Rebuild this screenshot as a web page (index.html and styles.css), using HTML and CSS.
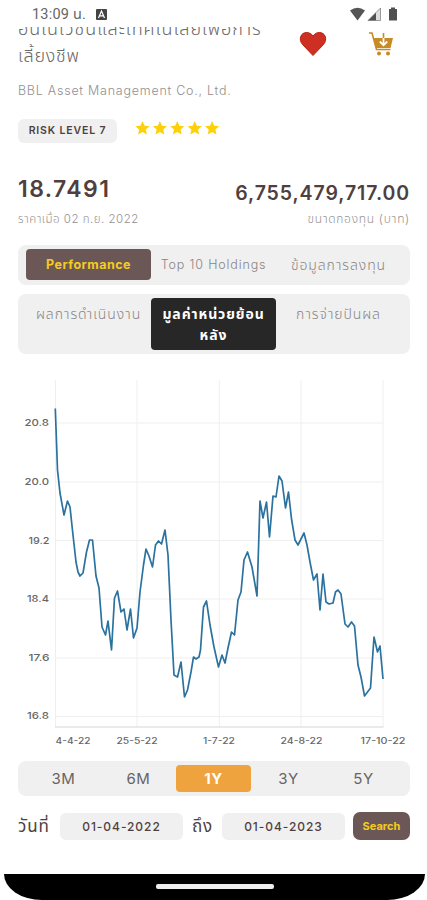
FILE: index.html
```html
<!DOCTYPE html>
<html lang="th">
<head>
    <meta charset="UTF-8">
    <meta name="viewport" content="width=device-width, initial-scale=1.0">
    <title>Fund Performance</title>
    <link rel="stylesheet" href="styles.css">
</head>
<body>
    <header class="status-bar">
        <span class="clock">13:09 น.</span>
        <svg class="app-icon" viewBox="0 0 11 11"><rect width="11" height="11" rx="1" fill="#444"/><path d="M2.5 9 5.5 2 8.5 9M3.8 6.8h3.4" fill="none" stroke="#fff" stroke-width="1.2"/></svg>
        <svg class="status-icons" viewBox="0 0 48 15">
            <path d="M0 3.500Q7.500-2.200 15 3.500L7.500 13.500Z" fill="#555"/>
            <path d="M18 13.500 30.500 1v12.500Z" fill="#ddd"/>
            <path d="M18 13.500 26 5.500v8Z" fill="#505050"/>
            <path d="M18 13.500 30.500 1v12.500Z" fill="none" stroke="#777" stroke-width=".7"/>
            <path d="M41 .5h4v1.500h2v11.500h-8V2h2Z" fill="#505050"/>
        </svg>
    </header>

    <main class="content">
        <section class="fund-header">
            <div class="fund-name">
                <div class="name-clip"><span class="name-line first">อินโนเวชั่นและเทคโนโลยีเพื่อการ</span></div>
                <span class="name-line second">เลี้ยงชีพ</span>
            </div>
            <div class="actions">
                <svg class="heart" viewBox="0 0 28 26"><path d="M14 24.500 3.500 13.500C-1 8 2 1.500 7.500 1.500c3 0 5 1.300 6.500 3.500 1.500-2.200 3.500-3.500 6.500-3.500 5.500 0 8.500 6.500 4 12Z" fill="#cd3023" stroke="#b91f14"/></svg>
                <svg class="cart" viewBox="0 0 26 26">
                    <path d="M1 2h3l4.500 16.500h14" fill="none" stroke="#c78a24" stroke-width="1.600"/>
                    <path d="M5.500 7H25l-2.500 10H8.300Z" fill="#c78a24"/>
                    <path d="M15.500 7v7M11.800 10.500l3.700 3.800 3.700-3.800" fill="none" stroke="#fff" stroke-width="1.800"/>
                    <path d="M15.500 2v5" stroke="#c78a24" stroke-width="1.600"/>
                    <circle cx="11" cy="22.500" r="2" fill="#c78a24"/>
                    <circle cx="20" cy="22.500" r="2" fill="#c78a24"/>
                </svg>
            </div>
        </section>

        <p class="company">BBL Asset Management Co., Ltd.</p>

        <div class="rating">
            <span class="risk">RISK LEVEL 7</span>
            <svg class="stars" viewBox="0 0 86 16" fill="#fdd109">
                <defs><path id="star" d="M8 1l2.100 4.700 5 .5-3.800 3.400 1.100 5L8 12l-4.400 2.600 1.100-5L.9 6.200l5-.5Z"/></defs>
                <use href="#star" x="-.5"/>
                <use href="#star" x="16.900"/>
                <use href="#star" x="34.300"/>
                <use href="#star" x="51.700"/>
                <use href="#star" x="69.100"/>
            </svg>
        </div>

        <section class="summary">
            <div>
                <div class="price">18.7491</div>
                <div class="caption">ราคาเมื่อ 02 ก.ย. 2022</div>
            </div>
            <div class="right">
                <div class="size">6,755,479,717.00</div>
                <div class="caption fund-size">ขนาดกองทุน (บาท)</div>
            </div>
        </section>

        <nav class="tabs main-tabs">
            <span class="tab active">Performance</span>
            <span class="tab holdings">Top 10 Holdings</span>
            <span class="tab thai">ข้อมูลการลงทุน</span>
        </nav>
        <nav class="tabs sub-tabs">
            <span class="tab thai">ผลการดำเนินงาน</span>
            <span class="tab thai active">มูลค่าหน่วยย้อน<br>หลัง</span>
            <span class="tab thai">การจ่ายปันผล</span>
        </nav>

        <svg class="chart" viewBox="0 370 427 380">
            <g class="grid">
                <path d="M55.500 380V727M137 380V727M219.300 380V727M301 380V727M383 380V727"/>
                <path d="M55 423H383M55 482H383M55 540.500H383M55 599H383M55 658H383M55 716.500H383"/>
            </g>
            <path class="axis" d="M55 727H383.500"/>
            <g class="y-labels">
                <text x="49" y="426" textLength="24.500" lengthAdjust="spacingAndGlyphs">20.8</text>
                <text x="49" y="485" textLength="24.500" lengthAdjust="spacingAndGlyphs">20.0</text>
                <text x="49.500" y="543.500" textLength="21" lengthAdjust="spacingAndGlyphs">19.2</text>
                <text x="49" y="602" textLength="22" lengthAdjust="spacingAndGlyphs">18.4</text>
                <text x="49.500" y="660.500" textLength="21" lengthAdjust="spacingAndGlyphs">17.6</text>
                <text x="49" y="719" textLength="22" lengthAdjust="spacingAndGlyphs">16.8</text>
            </g>
            <g class="x-labels">
                <text x="73" y="743.500" textLength="35" lengthAdjust="spacingAndGlyphs">4-4-22</text>
                <text x="137" y="743.500" textLength="41" lengthAdjust="spacingAndGlyphs">25-5-22</text>
                <text x="219" y="743.500" textLength="32" lengthAdjust="spacingAndGlyphs">1-7-22</text>
                <text x="301.500" y="743.500" textLength="42" lengthAdjust="spacingAndGlyphs">24-8-22</text>
                <text x="383" y="743.500" textLength="45" lengthAdjust="spacingAndGlyphs">17-10-22</text>
            </g>
            <polyline class="line" points="55.3,408.500 57.500,470 60,493 64,515 67.500,501 70,507 73,535 76,562 78,572 80,576 83,573 86.500,552 89.500,540 92.500,540 96,576 99,588 102,627 105.500,635 108,621 111.500,650 114.500,598 117.500,591 121,612 124,609 127,630 130.500,609 133.500,638 137,628 140,592 143.500,565 146,549 149,556 152.500,567 155.500,545 158.500,541 161.500,544 165,530 168,555 171,620 174,675 177.500,677 181,662 184.500,697 187.500,690 191,672 193.500,657 196,659 199,657 200.500,650 203.500,607 206.500,601 210,625 214,647 218.500,667 222,655 225,663 228,648 231.500,632 234.500,635 238,600 241,592 244,560 247.500,552 252,567 257,596 260,501 263,518 266.500,502 269.500,537 273,496 276,497 279,476 282,481 285.500,508 288.500,492 291.500,519 295,540 298,545 304,533 307,545 310,562 313.500,580 317,574 320,610 323,574 326,602 329,604 333,603 335.500,592 338,590 341,594 345,624 348,627 351.500,622 354.500,626 358,665 361,677 364.500,696 370.500,688 374,637 377.500,652 380,646 383,679"/>
        </svg>

        <nav class="periods">
            <span>3M</span>
            <span>6M</span>
            <span class="active">1Y</span>
            <span>3Y</span>
            <span>5Y</span>
        </nav>

        <div class="date-row">
            <span class="date-label from">วันที่</span>
            <span class="date">01-04-2022</span>
            <span class="date-label to">ถึง</span>
            <span class="date">01-04-2023</span>
            <button class="search">Search</button>
        </div>
    </main>

    <footer class="phone-bottom">
        <span class="home-bar"></span>
    </footer>
</body>
</html>
```
FILE: styles.css
```css
* {
    box-sizing: border-box;
}

body {
    margin: 0;
    height: 900px;
    display: flex;
    flex-direction: column;
    overflow: hidden;
    background-color: #ffffff;
    color: #4f3f40;
    font-family: Inter, "Noto Sans", "Noto Sans Thai", sans-serif;
}

svg {
    display: block;
    flex-shrink: 0;
}

.status-bar {
    height: 27px;
    flex-shrink: 0;
    display: flex;
    align-items: flex-start;
    padding: 6px 29px 0 32px;
}

.clock {
    width: 64px;
    color: #666;
    font-family: Roboto, "Noto Sans Thai", sans-serif;
    font-size: 14.5px;
    line-height: 17px;
    letter-spacing: 0.2px;
    white-space: nowrap;
}

.app-icon {
    width: 11px;
    height: 11px;
    margin-top: 3px;
}

.status-icons {
    width: 48px;
    height: 15px;
    margin-top: 1px;
    margin-left: auto;
}

.content {
    height: 847px;
    flex-shrink: 0;
    padding: 0 17px 0 18px;
}

.fund-header {
    height: 44px;
    display: flex;
    justify-content: space-between;
}

.fund-name {
    color: #6b6767;
    font-size: 18px;
    font-weight: 300;
    white-space: nowrap;
}

/* first line is scrolled under the status bar */
.name-clip {
    width: 260px;
    height: 13px;
    overflow: hidden;
}

.name-line {
    display: block;
    line-height: 24px;
}

.name-line.first {
    margin-top: -10px;
    letter-spacing: 0.95px;
}

.name-line.second {
    margin-top: 4px;
    letter-spacing: 0.7px;
}

.actions {
    display: flex;
    gap: 41px;
    margin-left: -20px;
    padding-right: 16px;
    padding-top: 4px;
}

.heart {
    width: 28px;
    height: 26px;
}

.cart {
    width: 26px;
    height: 26px;
}

.company {
    margin: 11px 0 0;
    height: 18px;
    color: #949090;
    font-size: 12.5px;
    font-weight: 300;
    line-height: 18px;
    letter-spacing: 0.75px;
}

.rating {
    display: flex;
    gap: 18px;
    margin-top: 19px;
}

.risk {
    width: 99px;
    height: 24px;
    border-radius: 6px;
    background-color: #f0f0f0;
    font-size: 10.5px;
    font-weight: 600;
    line-height: 24px;
    letter-spacing: 0.85px;
    text-align: center;
}

.stars {
    width: 86px;
    height: 16px;
    margin-top: 1px;
}

.summary {
    height: 52px;
    display: flex;
    justify-content: space-between;
    margin-top: 32px;
}

.price {
    height: 35px;
    font-size: 23px;
    font-weight: 600;
    line-height: 28px;
    letter-spacing: 1.4px;
}

.right {
    text-align: right;
}

.size {
    height: 35px;
    padding-top: 4px;
    font-size: 19.5px;
    font-weight: 600;
    line-height: 28px;
    letter-spacing: 0.9px;
}

.caption {
    color: #949090;
    font-size: 11.5px;
    font-weight: 300;
    line-height: 18px;
    letter-spacing: 0.5px;
}

.fund-size {
    font-size: 12px;
    letter-spacing: 0.7px;
}

.tabs {
    display: grid;
    grid-template-columns: 125px 125px 125px;
    border-radius: 8px;
    background-color: #f0f0f0;
    padding: 4px 8px;
    color: #898585;
    font-size: 12px;
    text-align: center;
    white-space: nowrap;
}

.main-tabs {
    height: 40px;
    margin-top: 18px;
}

.main-tabs .tab {
    height: 31px;
    line-height: 31px;
}

.tabs .thai {
    font-size: 14px;
    font-weight: 300;
    letter-spacing: 0.9px;
}

.holdings {
    font-size: 12.5px;
    letter-spacing: 0.85px;
    font-weight: 300;
}

.main-tabs .active {
    border-radius: 4px;
    background-color: #6c5757;
    color: #f6cb20;
    font-size: 12.5px;
    font-weight: 700;
    letter-spacing: 0.5px;
}

.sub-tabs {
    height: 60px;
    margin-top: 9px;
}

.sub-tabs .tab {
    height: 52px;
    line-height: 21px;
    padding-top: 5px;
}

.sub-tabs .active {
    border-radius: 4px;
    background-color: #272727;
    color: #ffffff;
    font-weight: 700;
}

.chart {
    width: 427px;
    height: 380px;
    margin: 16px 0 0 -18px;
}

.grid path {
    stroke: #efefef;
    stroke-width: 1;
}

.axis {
    stroke: #d6d6d6;
    stroke-width: 1.2;
}

.line {
    fill: none;
    stroke: #2b729f;
    stroke-width: 1.7;
    stroke-linejoin: round;
}

.y-labels,
.x-labels {
    fill: #666;
    font-size: 9.5px;
    font-weight: 500;
}

.y-labels {
    text-anchor: end;
}

.x-labels {
    text-anchor: middle;
    font-size: 8.5px;
}

.periods {
    height: 35px;
    display: grid;
    grid-template-columns: repeat(5, 75px);
    align-items: center;
    margin-top: 11px;
    padding: 0 8px;
    border-radius: 8px;
    background-color: #f0f0f0;
    color: #686464;
    font-size: 15px;
    letter-spacing: 0.5px;
    text-align: center;
}

.periods .active {
    height: 27px;
    border-radius: 4px;
    background-color: #efa33e;
    color: #ffffff;
    font-weight: 700;
    line-height: 27px;
}

.date-row {
    height: 28px;
    display: flex;
    align-items: center;
    margin-top: 16px;
}

.date-label {
    flex-shrink: 0;
    font-size: 17px;
    line-height: 28px;
    letter-spacing: 0.8px;
    white-space: nowrap;
}

.from {
    width: 42px;
}

.to {
    width: 39px;
    padding-left: 9px;
}

.date {
    width: 123px;
    height: 27px;
    flex-shrink: 0;
    border-radius: 6px;
    background-color: #f0f0f0;
    font-size: 12px;
    font-weight: 500;
    line-height: 27px;
    letter-spacing: 0.95px;
    text-align: center;
}

.search {
    width: 57px;
    height: 28px;
    margin-left: auto;
    padding: 0;
    border: 0;
    border-radius: 7px;
    background-color: #6c5757;
    color: #f6cb20;
    font-family: inherit;
    font-size: 11px;
    font-weight: 700;
}

.phone-bottom {
    height: 26px;
    flex-shrink: 0;
    display: flex;
    justify-content: center;
    margin: 0 2px 0 4px;
    border-radius: 0 0 38px 38px / 0 0 26px 26px;
    background-color: #000000;
}

.home-bar {
    width: 118px;
    height: 5px;
    margin-top: 10px;
    border-radius: 2px;
    background-color: #eeeeee;
}
```
